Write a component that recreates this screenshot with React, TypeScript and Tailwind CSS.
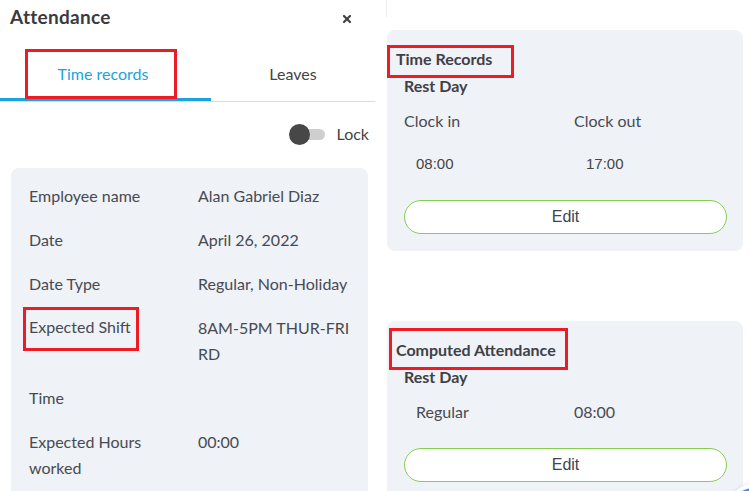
import { X } from "lucide-react";

const font = { fontFamily: "Lato, 'Open Sans', sans-serif" };

const details = [
  { label: "Employee name", value: "Alan Gabriel Diaz" },
  { label: "Date", value: "April 26, 2022" },
  { label: "Date Type", value: "Regular, Non-Holiday" },
  { label: "Expected Shift", value: "8AM-5PM THUR-FRI RD", marked: true },
  { label: "Time", value: "" },
  { label: "Expected Hours worked", value: "00:00" },
];

const EditButton = () => (
  <button className="mt-[26px] ml-[17px] mr-[16px] h-[34px] rounded-full border border-[#84d04e] bg-white text-[16px] text-[#3f4450] font-['Liberation_Sans',Arial,sans-serif]">
    Edit
  </button>
);

const App = () => {
  return (
    <div className="relative flex w-[749px] h-[491px] overflow-hidden bg-white text-[#474a52]" style={font}>
      {/* Left panel */}
      <div className="w-[375px] shrink-0 flex flex-col">
        <div className="h-[34px] px-[10px] flex items-center justify-between">
          <h1 className="text-[19px] tracking-[0.3px] font-bold text-[#3a3a3f]">Attendance</h1>
          <X className="w-[12px] h-[12px] mr-[12px] mt-[4px] text-[#444]" strokeWidth={4.5} />
        </div>

        <div className="mt-[13px] flex border-b border-[#d3dfe4]">
          <div className="w-[211px] h-[54px] flex items-center border-b-[3px] border-[#1ba3dd]">
            <div className="ml-[25px] w-[152px] h-[50px] mt-[3px] border-[3px] border-[#ed1c24] pl-[4px] flex items-center justify-center text-[16px] text-[#1ba3dd]">
              Time records
            </div>
          </div>
          <div className="flex-1 h-[54px] flex items-center justify-center text-[16px] text-[#444]">
            Leaves
          </div>
        </div>

        <div className="mt-[15px] h-[34px] flex items-center justify-end pr-[6px]">
          <div className="relative w-[36px] h-[21px]">
            <div className="absolute left-[10px] top-[5px] w-[26px] h-[11px] rounded-full bg-[#cfcfcf]" />
            <div className="absolute left-0 top-0 w-[21px] h-[21px] rounded-full bg-[#474747]" />
          </div>
          <span className="ml-[12px] text-[16px] text-[#444]">Lock</span>
        </div>

        <div className="mt-[17px] ml-[11px] mr-[7px] flex-1 rounded-t-lg bg-[#eff2f6] pt-[6px] pl-[18px]">
          {details.map((d) => (
            <div key={d.label} className="grid grid-cols-[169px_1fr] py-[9px] text-[16px] leading-[26px]">
              <div className="pr-[25px]">
                {d.marked ? (
                  <div className="-mt-[8px] -ml-[6px] w-[116px] h-[44px] border-[3px] border-[#ed1c24] pl-[3px] pt-[4px]">
                    {d.label}
                  </div>
                ) : (
                  d.label
                )}
              </div>
              <div className="w-[152px]">{d.value}</div>
            </div>
          ))}
        </div>
      </div>

      {/* Right column */}
      <div className="flex-1 flex flex-col pl-[12px] pr-[6px]">
        <div className="-ml-[1px] w-[1px] h-[17px] bg-[#ececec]" />

        <div className="mt-[13px] h-[221px] rounded-lg bg-[#eff2f6] flex flex-col pt-[15px] pb-[17px]">
          <div className="w-[127px] h-[33px] border-[3px] border-[#ed1c24] pl-[6px] pt-[1px] text-[16px] leading-[20px] font-bold text-[#3f4046]">
            Time Records
          </div>
          <div className="-mt-[2px] pl-[17px] text-[16px] leading-[20px] font-bold text-[#3f4046]">Rest Day</div>
          <div className="mt-[15px] pl-[17px] grid grid-cols-[170px_1fr] text-[16px] leading-[20px]">
            <span>Clock in</span>
            <span>Clock out</span>
          </div>
          <div className="mt-[23px] pl-[29px] grid grid-cols-[170px_1fr] leading-[20px] font-['Liberation_Sans',Arial,sans-serif] text-[15px] text-[#444]">
            <span>08:00</span>
            <span>17:00</span>
          </div>
          <EditButton />
        </div>

        <div className="mt-[70px] flex-1 rounded-t-lg bg-[#eff2f6] flex flex-col pt-[7px]">
          <div className="ml-[2px] w-[179px] h-[42px] border-[3px] border-[#ed1c24] pl-[4px] pt-[9px] text-[16px] leading-[20px] font-bold text-[#3f4046]">
            Computed Attendance
          </div>
          <div className="-mt-[3px] pl-[17px] text-[16px] leading-[20px] font-bold text-[#3f4046]">Rest Day</div>
          <div className="mt-[15px] pl-[29px] grid grid-cols-[158px_1fr] text-[16px] leading-[20px]">
            <span>Regular</span>
            <span>08:00</span>
          </div>
          <EditButton />
        </div>
      </div>

      {/* floating button peeking at the corner */}
      <div className="absolute left-[726px] top-[484px] w-[56px] h-[56px] rounded-full bg-white shadow-[0_0_5px_rgba(0,0,0,0.1)] p-[4px]">
        <div className="w-full h-full rounded-full bg-[#5a82ea]" />
      </div>
    </div>
  );
};

export default App;
